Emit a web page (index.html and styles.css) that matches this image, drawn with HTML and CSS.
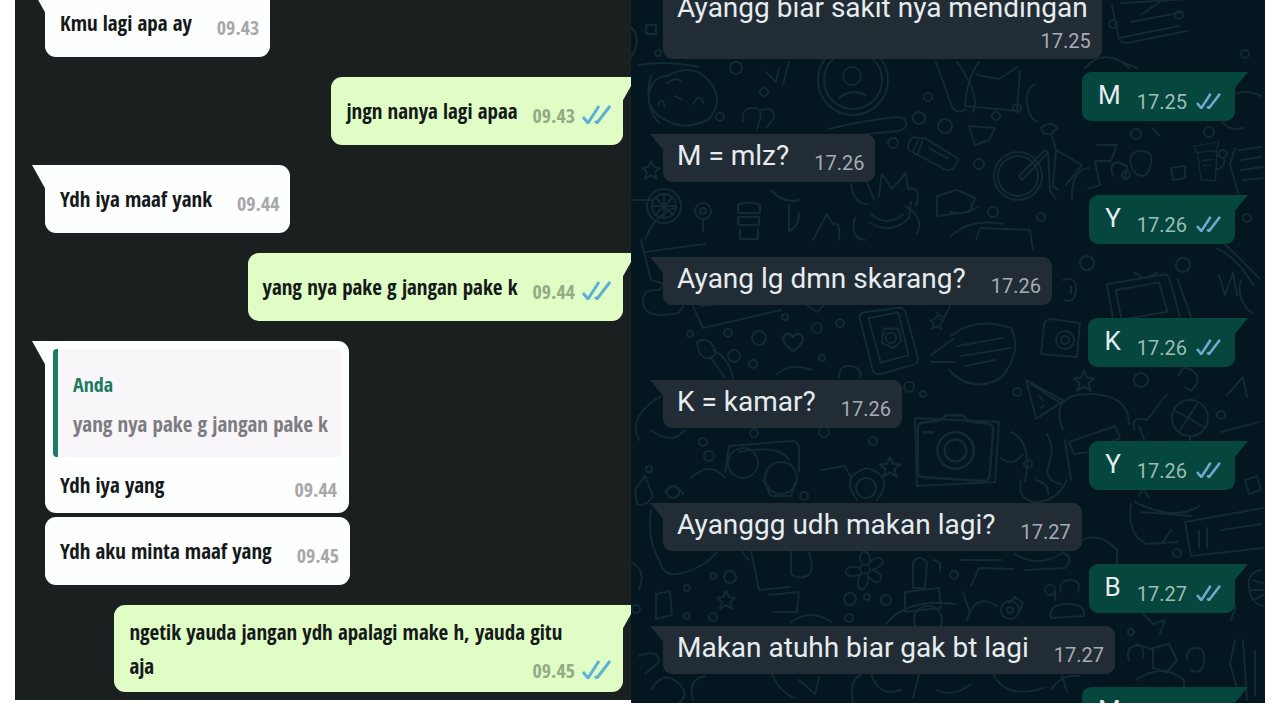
FILE: index.html
```html
<!doctype html>
<html lang="id">
<head>
	<title>Chat</title>
	<meta charset="utf-8">
	<meta name="viewport" content="width=device-width, initial-scale=1">
	<link rel="stylesheet" href="styles.css">
</head>
<body>

	<!-- shared shapes -->
	<svg class="defs" aria-hidden="true">
		<symbol id="ticks" viewBox="0 0 29 20"><path d="M1 13l5 6L17 2M13 17l2 2L28 2"/></symbol>
		<symbol id="star" viewBox="0 0 20 20"><path d="M10 1l3 6 6 1-5 4 2 7-6-4-6 4 2-7-5-4 6-1z"/></symbol>
		<symbol id="heart" viewBox="0 0 20 20"><path d="M10 18C3 12 1 9 2 6s6-4 8 0c2-4 7-3 8 0s-1 6-8 12z"/></symbol>
		<symbol id="flower" viewBox="0 0 50 50"><circle cx="25" cy="25" r="5"/><path d="M22 20C13 3 35 2 29 20c10-16 25 0 3 6 18 4 8 22-4 6 2 20-19 18-7-2C2 40-2 17 20 24"/></symbol>
		<symbol id="cam" viewBox="0 0 70 60"><path d="M4 12q0-5 5-5l14-2 4-4h14l4 5 17 2q4 1 4 5l-3 38q-1 5-6 4L9 52q-5 0-5-5zM8 15h9"/><circle cx="35" cy="30" r="15"/><circle cx="35" cy="30" r="9"/></symbol>
		<symbol id="bike" viewBox="0 0 100 85"><circle cx="27" cy="56" r="24"/><circle cx="27" cy="56" r="20"/><path d="M28 56l26-26 3 3-26 27zM50 8q10-8 16 0l-6 6q-8 2-10-6zM61 16l4 14 26 15-16 20M57 33l2 38 6 8M65 30l-3 36 5 4"/><path d="M98 48q-18 2-17 30"/></symbol>
		<symbol id="cup" viewBox="0 0 50 60"><path d="M5 8l34-6-4 12-27 3zM9 17l5 38 20 1 2-42M36 22q12 0 10 9t-11 9M15 28l15-1M16 35l12-1"/></symbol>
		<symbol id="phone" viewBox="0 0 64 70"><path d="M8 6Q2 7 4 14l12 48q2 6 8 4l32-9q5-2 4-7L48 6q-2-5-8-4zM12 12l29-6 10 42-27 7zM27 22h14l3 12-8 7-11-5z"/><circle cx="34" cy="31" r="5"/></symbol>
		<symbol id="bottle" viewBox="0 0 60 40"><path d="M8 2q-8 6-5 14l40 21q9 2 13-12L20 3zM13 5L7 18M18 5l-6 16M25 14l20 11"/></symbol>
		<symbol id="tv" viewBox="0 0 100 60"><path d="M6 14l58-10q5 0 6 5l10 36q0 5-5 6L14 58zM15 20l44-8 9 30-47 8zM78 8l14 40M34 2l10 6 14-6"/></symbol>
		<symbol id="pizza" viewBox="0 0 45 45"><path d="M3 4l37 20-27 18zM8 8l27 17M16 20l3 4M17 31l4-2"/></symbol>
		<symbol id="cat" viewBox="0 0 70 60"><path d="M8 44Q2 26 14 20L12 4l14 12q10-2 18 1L57 3l2 18q12 17-4 31-22 12-44-2zM20 32l5-4 4 5M40 32l5-5 5 4M31 41l4 2 4-3M1 35l13 3M66 35l-14 3"/></symbol>
	</svg>

	<main class="board">

		<section class="chat light" aria-label="Obrolan kiri">
			<ol class="list">
				<li class="msg in"><p>Kmu lagi apa ay</p><time>09.43</time></li>
				<li class="msg out"><p>jngn nanya lagi apaa</p><time>09.43</time><svg class="ticks" role="img" aria-label="Dibaca"><use href="#ticks"/></svg></li>
				<li class="msg in"><p>Ydh iya maaf yank</p><time>09.44</time></li>
				<li class="msg out"><p>yang nya pake g jangan pake k</p><time>09.44</time><svg class="ticks" role="img" aria-label="Dibaca"><use href="#ticks"/></svg></li>
				<li class="msg in reply">
					<blockquote>
						<cite>Anda</cite>
						<p>yang nya pake g jangan pake k</p>
					</blockquote>
					<div class="line"><p>Ydh iya yang</p><time>09.44</time></div>
				</li>
				<li class="msg in grouped"><p>Ydh aku minta maaf yang</p><time>09.45</time></li>
				<li class="msg out long">
					<p>ngetik yauda jangan ydh apalagi make h, yauda gitu aja</p>
					<div class="meta"><time>09.45</time><svg class="ticks" role="img" aria-label="Dibaca"><use href="#ticks"/></svg></div>
				</li>
			</ol>
		</section>

		<section class="chat dark" aria-label="Obrolan kanan">
			<svg class="doodles" viewBox="0 0 634 703" preserveAspectRatio="xMidYMid slice" aria-hidden="true">
				<!-- top -->
				<path d="M8 65q25-5 60 2M20 75q-8 30 8 48M36 76q26-14 42 5t0 38q-22 12-42 2t-18-27 18-18zM36 83q8-7 15-1M27 105q4-10 7 2M44 96l6 3M62 104q8-12 10-1M0 27q12 12 0 30M15 25h10v9H15z"/>
				<circle cx="222" cy="80" r="35"/><circle cx="222" cy="80" r="29"/><circle cx="221" cy="76" r="9"/><path d="M208 98q12-10 27-3"/>
				<path d="M112 122q-2-14 9-14t8 11l-3 10M130 110q14-4 13 8l-7 9M198 129q30-8 68-12 8 0 9 6t-8 8l-60 6M135 72l10 10 3-14M158 62l-6 22M305 62l16 45q6 8 14 2"/>
				<path d="M481 5l6 30q1 8 9 8l60-12M490 3l68-4M510 15l20-14M500 22l52-10M488 38l60-12M398 44l52-14M404 35q-4-6 4-8h40l4 12M412 20l20-2v14M398 52l48-3M440 40q18-12 12 13"/>
				<path d="M326 62q24 34 16 50M348 62q-12 16-14 44l52 5 3-40M346 75l22 4 18-12M454 68q20-22 44 0M486 60l20 8M404 84q-10 6-8 20t10 18"/>
				<use href="#bike" x="360" y="120" width="100" height="85"/>
				<use href="#bottle" x="275" y="134" width="56" height="40"/>
				<use href="#star" x="10" y="160" width="20" height="20"/>
				<path d="M0 200h22M14 240q10-26 30-32"/><circle cx="33" cy="206" r="17"/><circle cx="33" cy="206" r="12"/><path d="M33 194v24M21 206h24M25 198l17 17M41 198l-17 17"/>
				<circle cx="72" cy="211" r="8"/><circle cx="72" cy="211" r="3"/><path d="M72 219v12M107 205q10-5 22 0v8h-22zM107 217h21v8h-21zM109 229v10h18v-10M158 205v26q10-4 10-18M140 190q12 14 28 10M182 240l14-26 6 10q8-4 6 16"/>
				<path d="M220 184q2 20 17 20M243 200l-8-20M248 196l3-22 10 15 14-16 2 16q14-4 8 17M224 218q-6 20 10 22M240 214q16 14 32 0M238 222q22 14 40-4l2-16M274 206q20 12 12 27"/>
				<path d="M320 212q14 4 28-6M306 196l20-6 18 8-6 14-32 4zM320 236q20-18 52-12M345 240l4-12 50 2 3 20M466 145h20l-6 16h-16l5 24-12 4M500 165q-3-14 10-14t10 13-10 12-10-11M482 176q-4-12 4-14l10 4-2 14M540 168l14-2v12l-12 2z"/>
				<path d="M604 148l-5 16 9 32M608 150l22-3M610 160l20-3M610 170l22-3M612 180l20-2M338 126l26 2-6 12-14 5zM521 128l8 8M590 120q8 12 22 8M600 96q14-8 30 0"/>
				<!-- middle -->
				<path d="M10 240l10 40 20 6M14 252l60-8M12 302q0-14 16-12 8-12 22-3 8 16-3 26-34 7-35-11zM62 306l10 22 78-18M70 306l60-6M174 304l12 8 8-8"/>
				<circle cx="128" cy="338" r="7"/><use href="#heart" x="150" y="330" width="24" height="24"/><path d="M66 342q10-6 16 4t-4 12-12-16zM80 358l14 20M82 350q16 8 20 28M146 374q14-12 34-4M208 378q0-14 12-12t9 12"/>
				<use href="#phone" x="225" y="306" width="66" height="72"/>
				<path d="M305 312l8 6 6-12M300 355l22-16M300 362h24"/><use href="#star" x="298" y="314" width="16" height="16"/>
				<path d="M320 336q24-20 60-8 12 24-10 50-30 16-52-8M326 346l46-8M330 356l50-8M334 366l30-6M413 325q1-6 8-6l28 4-3 34-36-3z"/><circle cx="434" cy="340" r="9"/><circle cx="434" cy="340" r="4"/>
				<use href="#tv" x="470" y="270" width="98" height="60"/>
				<path d="M585 248q20 8 38 38M594 244l34 34M610 280q-6 20 12 34M588 275l6 20 8-22 4 22M432 280q14-4 13 10t-12 10M440 286v8"/><circle cx="456" cy="263" r="7"/><circle cx="552" cy="265" r="7"/>
				<use href="#pizza" x="392" y="376" width="46" height="46"/><use href="#star" x="442" y="370" width="22" height="22"/>
				<path d="M432 430q-14-36 26-36t40 30M438 442l46-16 5 12-30 14-16 2zM434 440l6 40M504 430q-6-14 12-10l20-26M508 426l6 16"/><circle cx="559" cy="418" r="18"/><path d="M543 410l32 18M548 432l18-28M559 436v12M548 375q4-12 14-4t-2 20l-6-4M596 395l16-18 4 20M590 432l38-10"/>
				<path d="M8 440q-12-24 22-44M20 430q20 16 34 0M98 446l62-5q8 0 8 8v22M98 446l-4 26M108 452q40-8 50 8"/><circle cx="112" cy="463" r="15"/><circle cx="150" cy="478" r="16"/>
				<use href="#cam" x="282" y="413" width="85" height="75"/><path d="M284 418l84 4-4 60-78 4z"/><use href="#star" x="248" y="456" width="22" height="22"/>
				<path d="M380 432q22 10 14 50M370 458q12 10 22-4M416 434q8 14 2 30t12 20M190 470l24-4 6 12M60 478q20-18 34 0"/>
				<!-- bottom -->
				<path d="M4 490l10-14 8 20q-8 12-16 8zM34 492q10-12 18 2M132 480l8 16h20l4-14M226 500q-18-24 10-32 28 8 10 32"/><circle cx="42" cy="492" r="6"/><circle cx="235" cy="488" r="10"/>
				<path d="M20 510q-4 30 8 50 4 16 18 14t30-12l10-10M118 560q-10-8-6-18 8-4 8 8l8 40 30-3M160 550v24q8 6 16 2t2-24M142 612h24l2-20-30 3M0 562q16 8 8 28"/>
				<use href="#flower" x="208" y="545" width="52" height="48"/><path d="M282 562q6-8 14 0l-2 26M282 562v26h12M274 592l34-4 2 20-36 4zM303 560l6 3v8M255 624q20-26 70-20"/><circle cx="297" cy="620" r="14"/>
				<path d="M25 594l14-3 2 24-16 4zM160 622q20-14 40 0"/><use href="#star" x="85" y="590" width="20" height="20"/>
				<path d="M384 554q24 14 46 0M394 570l40-2q10-10-3-16M340 586l8-18 34 1M330 560h40M336 620q8-28 30-14M338 610l-6-18M420 618q-3-14 16-14t17 12zM424 600v-10M430 592q-3-12 9-12t8 12M378 603l6-6 8 6-4 9"/>
				<circle cx="379" cy="610" r="9"/><circle cx="379" cy="610" r="3"/>
				<path d="M390 480q-4 20 14 22 22 0 32-22M405 480q14 4 12 14M504 502q40 20 64 4M500 504q-4 32 16 40l30-2M510 512l50 4M532 542l8-12M554 522l78-14M554 522l6 34 72-8M568 530v18M576 528v20M590 530l40-6M614 480l12-4 4 14-12 4zM450 540q20-8 36 10v16M508 496l4-8 6 10"/>
				<path d="M630 570q-14 2-12 18t14 18M622 580l12 4M620 590h14M622 600l12-6M512 614l10 10 12-4-5 14M600 620l5-14M604 640l-5 24 10 34M612 640l4 60M624 650v46M505 644l18 6M498 660q-4-12 6-14t8 12M522 648l16-4 8 16-10 12-14-4zM556 660q-1-12 9-12t8 14-14 8"/>
				<path d="M8 656q20-8 20 6l-14 12M20 690q12-20 26-8t2 21M62 700q-6-20 12-24M140 672q8 20 24 26M168 680l16 14 4-16M222 703q-4-24 8-28M240 672q6 26 30 18M288 674l-6 24M306 690q16 8 34-6M362 674q14 26 50 14M420 690q10-16 28-14M505 680q26-18 48 0v20M430 672l6 20"/>
				<!-- cat -->
				<use href="#cat" x="160" y="10" width="60" height="46"/><use href="#cup" x="560" y="140" width="36" height="44"/>
				<!-- filler bits -->
				<g>
					<circle cx="27" cy="53" r="3"/><circle cx="89" cy="117" r="4"/><circle cx="105" cy="68" r="6"/><circle cx="133" cy="92" r="4"/><circle cx="288" cy="118" r="6"/><circle cx="297" cy="97" r="4"/><circle cx="314" cy="126" r="7"/><circle cx="262" cy="143" r="5"/><circle cx="365" cy="116" r="4"/><circle cx="386" cy="108" r="4"/>
					<circle cx="348" cy="164" r="5"/><circle cx="495" cy="175" r="4"/><circle cx="505" cy="134" r="5"/><circle cx="578" cy="132" r="5"/><circle cx="592" cy="154" r="4"/><circle cx="616" cy="218" r="4"/><circle cx="614" cy="54" r="4"/><circle cx="548" cy="15" r="4"/><circle cx="482" cy="24" r="4"/><circle cx="410" cy="217" r="4"/><circle cx="362" cy="212" r="5"/>
					<circle cx="97" cy="333" r="4"/><circle cx="103" cy="356" r="6"/><circle cx="154" cy="317" r="3"/><circle cx="186" cy="328" r="5"/><circle cx="209" cy="323" r="4"/><circle cx="122" cy="364" r="4"/><circle cx="191" cy="358" r="3"/><circle cx="59" cy="334" r="3"/><circle cx="278" cy="387" r="5"/><circle cx="292" cy="394" r="3"/><circle cx="510" cy="380" r="7"/><circle cx="386" cy="392" r="4"/>
					<circle cx="123" cy="433" r="4"/><circle cx="72" cy="442" r="4"/><circle cx="78" cy="456" r="5"/><circle cx="193" cy="432" r="5"/><circle cx="242" cy="441" r="4"/><circle cx="18" cy="469" r="3"/><circle cx="590" cy="415" r="4"/><circle cx="397" cy="464" r="4"/><circle cx="173" cy="496" r="4"/>
					<circle cx="82" cy="576" r="3"/><circle cx="99" cy="577" r="6"/><circle cx="56" cy="588" r="3"/><circle cx="56" cy="616" r="3"/><circle cx="82" cy="617" r="4"/><circle cx="219" cy="599" r="6"/><circle cx="236" cy="597" r="3"/><circle cx="255" cy="600" r="5"/><circle cx="218" cy="618" r="4"/><circle cx="5" cy="609" r="4"/><circle cx="323" cy="575" r="4"/><circle cx="546" cy="553" r="4"/><circle cx="419" cy="590" r="5"/><circle cx="500" cy="632" r="3"/>
				</g>
			</svg>
			<ol class="list">
				<li class="msg in stacked"><p>Ayangg biar sakit nya mendingan</p><time>17.25</time></li>
				<li class="msg out"><p>M</p><time>17.25</time><svg class="ticks" role="img" aria-label="Dibaca"><use href="#ticks"/></svg></li>
				<li class="msg in"><p>M = mlz?</p><time>17.26</time></li>
				<li class="msg out"><p>Y</p><time>17.26</time><svg class="ticks" role="img" aria-label="Dibaca"><use href="#ticks"/></svg></li>
				<li class="msg in"><p>Ayang lg dmn skarang?</p><time>17.26</time></li>
				<li class="msg out"><p>K</p><time>17.26</time><svg class="ticks" role="img" aria-label="Dibaca"><use href="#ticks"/></svg></li>
				<li class="msg in"><p>K = kamar?</p><time>17.26</time></li>
				<li class="msg out"><p>Y</p><time>17.26</time><svg class="ticks" role="img" aria-label="Dibaca"><use href="#ticks"/></svg></li>
				<li class="msg in"><p>Ayanggg udh makan lagi?</p><time>17.27</time></li>
				<li class="msg out"><p>B</p><time>17.27</time><svg class="ticks" role="img" aria-label="Dibaca"><use href="#ticks"/></svg></li>
				<li class="msg in"><p>Makan atuhh biar gak bt lagi</p><time>17.27</time></li>
				<li class="msg out"><p>M</p><time>17.27</time><svg class="ticks" role="img" aria-label="Dibaca"><use href="#ticks"/></svg></li>
			</ol>
		</section>

	</main>

</body>
</html>
```
FILE: styles.css
```css
* { box-sizing: border-box; }
body { margin: 0; background: #fff; }
p, ol, blockquote { margin: 0; padding: 0; }
ol { list-style: none; }

.defs { display: none; }

.board {
  display: grid;
  grid-template-columns: 616fr 634fr;
  align-items: start;
  height: 100vh;
  padding: 0 15px;
  overflow: hidden;
}

.chat { position: relative; overflow: hidden; }
.list { position: relative; display: flex; flex-direction: column; }

/* bubbles */
.msg { position: relative; display: flex; align-items: flex-start; }
.msg.in { align-self: flex-start; }
.msg.out { align-self: flex-end; }
.msg time { align-self: flex-end; white-space: nowrap; }

/* corner tails */
.msg::before {
  content: "";
  position: absolute;
  top: 0;
  width: 14px;
  background: inherit;
}
.msg.in::before { right: 100%; margin-right: -1px; clip-path: polygon(0 0, 100% 0, 100% 100%); }
.msg.out::before { left: 100%; margin-left: -1px; clip-path: polygon(0 0, 100% 0, 0 100%); }
.msg.in { border-top-left-radius: 0 !important; }
.msg.out { border-top-right-radius: 0 !important; }

.ticks { flex: none; align-self: flex-end; width: 29px; fill: none; stroke-width: 3; }

/* left chat */
.light {
  background: #1a1f20;
  color: #15191a;
  font-family: "Open Sans Condensed", "Liberation Sans Narrow", "DejaVu Sans Condensed", sans-serif;
  font-size: 21px;
  line-height: 34px;
  font-weight: bold;
}
.light .list { margin-top: -11px; padding: 0 8px 8px 30px; }
.light .msg { margin-bottom: 20px; padding: 17px 11px 17px 15px; border-radius: 11px; background: #fdfefe; }
.light .msg:last-child { margin-bottom: 0; }
.light .msg.out { padding-right: 12px; background: #e0fdc6; }
.light .msg::before { height: 25px; }
.light time { margin-left: 25px; color: #a8a8aa; font-size: 20px; line-height: 24px; }
.light .out time { margin-left: 15px; color: #97aa88; }
.light .ticks { height: 20px; margin: 0 0 4px 7px; stroke: #5fb0d6; }

.light .reply { flex-direction: column; align-items: stretch; margin-bottom: 4px; padding: 8px 8px 11px; }
.light .grouped { border-top-left-radius: 11px !important; }
.light .grouped::before { display: none; }
.reply blockquote {
  padding: 24px 13px 16px 15px;
  border-left: 5px solid #1b7a62;
  border-radius: 4px;
  background: #f8f6f9;
  color: #7d7c80;
}
.reply cite { display: block; margin-bottom: 10px; color: #1b7a62; font-size: 20px; line-height: 24px; font-style: normal; }
.reply .line { display: flex; justify-content: space-between; margin-top: 11px; padding: 0 4px 0 7px; }

.light .msg.long { display: block; max-width: 88%; padding: 10px 40px 9px 15px; }
.long p { display: inline; }
.long .meta { display: flex; float: right; margin: 10px -28px 0 0; }

/* right chat */
.dark {
  height: calc(100vh - 17px);
  background: #04161f;
  color: #e6ecef;
  font-family: Roboto, sans-serif;
  font-size: 26px;
  line-height: 30px;
}
.dark .list { gap: 13px; margin-top: -16px; padding: 0 30px 0 32px; }
.dark .msg { padding: 7px 11px 7px 14px; border-radius: 9px; background: #212c35; }
.dark .msg.in { font-size: 28px; }
.dark .msg.out { padding: 8px 12px 7px 16px; background: #05463d; }
.dark .msg::before { height: 17px; }
.dark .msg p { padding-bottom: 4px; }
.dark time { margin-left: 25px; color: #a6adb2; font-size: 20px; line-height: 24px; }
.dark .out time { margin-left: 16px; color: #9dbdb6; }
.dark .ticks { height: 17px; margin: 0 0 5px 7px; stroke: #6fa9cf; }
.dark .msg.stacked { flex-direction: column; padding: 9px 14px 6px; }
.dark .stacked p { padding-bottom: 6px; }
.dark .stacked time { margin-right: -3px; }

.doodles { position: absolute; inset: 0; width: 100%; height: 100%; fill: none; stroke: #112a34; stroke-width: 2; stroke-linecap: round; stroke-linejoin: round; }
```
